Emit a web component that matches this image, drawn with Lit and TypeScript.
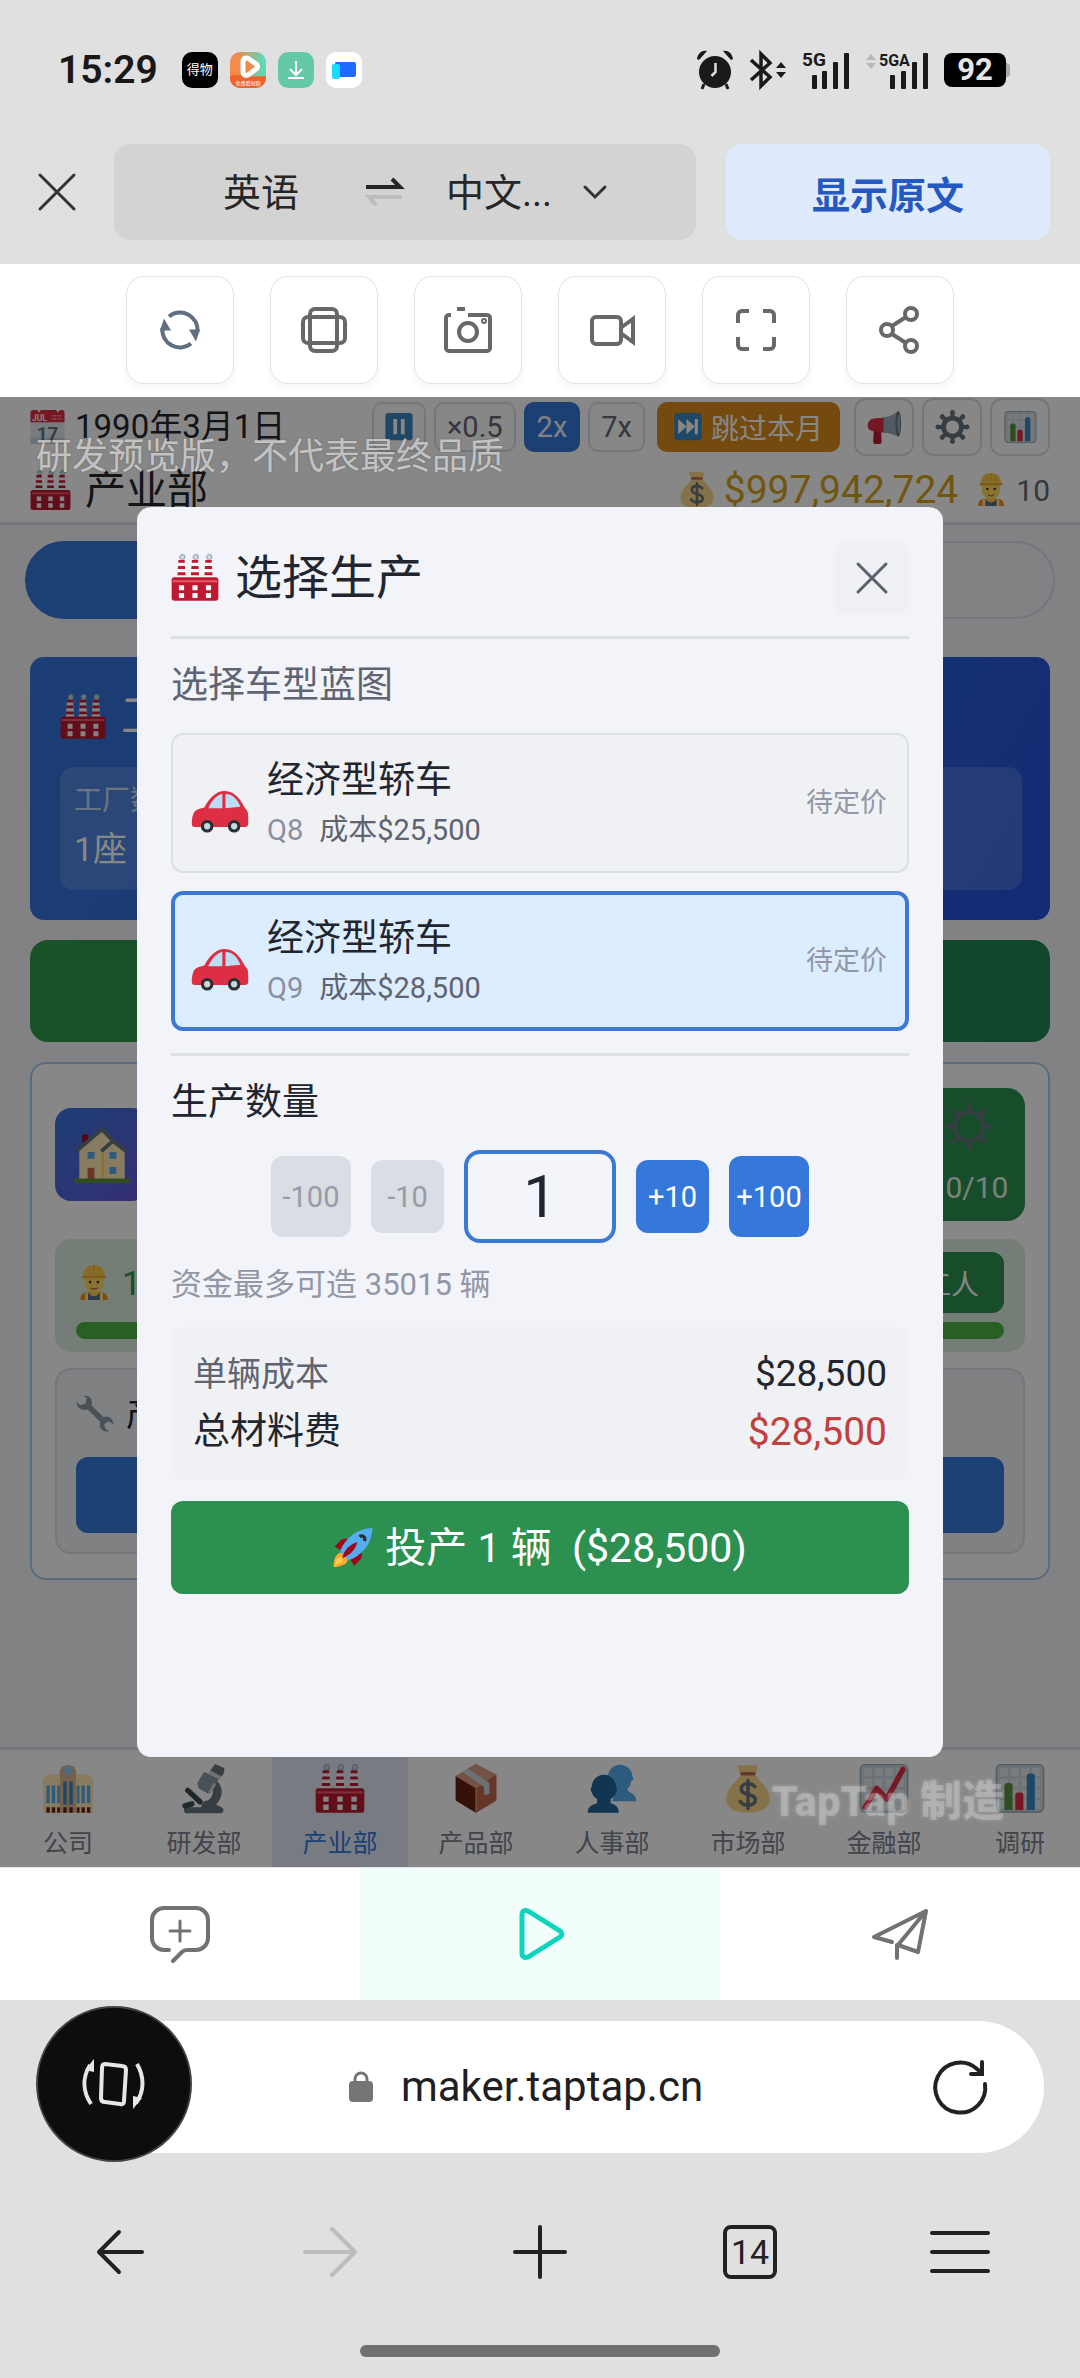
import { LitElement, css, html, svg } from "lit";
import { customElement, property, state } from "lit/decorators.js";
import { classMap } from "lit/directives/class-map.js";

const gearTeeth = [0, 45, 90, 135, 180, 225, 270, 315];
const chimneys = [7.6, 18, 28.4];

const chartGrid = svg`
    <rect x="0.5" y="0.5" width="35" height="35" rx="3.5" fill="#CCD6DD" stroke="#99AAB5" />
    <path d="M3 3h6v6H3zM11 3h6v6h-6zM19 3h6v6h-6zM27 3h6v6h-6zM3 11h6v6H3zM11 11h6v6h-6zM19 11h6v6h-6zM27 11h6v6h-6zM3 19h6v6H3zM11 19h6v6h-6zM19 19h6v6h-6zM27 19h6v6h-6zM3 27h6v6H3zM11 27h6v6h-6zM19 27h6v6h-6zM27 27h6v6h-6z" fill="#E1E8ED" />
`;

// colourful pictograms, all on a 36 unit grid
const emojis = {
    factory: svg`
        ${chimneys.map((x) => svg`
            <circle cx="${x + 0.6}" cy="2.4" r="2" fill="#CCD6DD" stroke="#99AAB5" stroke-width="0.8" />
            <path d="M${x - 2.4} 4.5h4.8l1 14h-6.8z" fill="#F5F8FA" />
            <path d="M${x - 2.4} 4.6h4.8l.15 2.2h-5.1zM${x - 2.7} 9.2h5.4l.15 2.3h-5.7zM${x - 3} 14h6l.15 2.3h-6.3z" fill="#BE1931" />
        `)}
        <path d="M2 18h32a2 2 0 0 1 2 2v14a2 2 0 0 1-2 2H2a2 2 0 0 1-2-2V20a2 2 0 0 1 2-2z" fill="#BE1931" />
        <path d="M1 20.2h34v1.6H1z" fill="#EA596E" />
        <path d="M5.6 24h4v4h-4zM16 24h4v4h-4zM26.4 24h4v4h-4zM5.6 30h4v4h-4zM16 30h4v4h-4zM26.4 30h4v4h-4z" fill="#F5F8FA" />
    `,
    calendar: svg`
        <path d="M0 10h36v23a3 3 0 0 1-3 3H3a3 3 0 0 1-3-3z" fill="#E1E8ED" />
        <path d="M0 29h36v4a3 3 0 0 1-3 3H3a3 3 0 0 1-3-3z" fill="#CCD6DD" />
        <path d="M3 0h30a3 3 0 0 1 3 3v10H0V3a3 3 0 0 1 3-3z" fill="#DD2E44" />
        <path d="M7 0h4l-2 3zM27 0h4l-2 3z" fill="#F5F8FA" />
        <text x="1.5" y="11.5" font-size="9" font-weight="700" fill="#F5F8FA">JUL</text>
        <path d="M23 6h10M23 9.5h10" stroke="#F4ABBA" stroke-width="1.5" stroke-dasharray="1.6 1.1" />
        <text x="18" y="31.5" font-size="20" font-weight="700" text-anchor="middle" fill="#66757F">17</text>
    `,
    pause: svg`
        <rect width="36" height="36" rx="4" fill="#3B88C3" />
        <path d="M10.5 8h5v20h-5zM20.500 8h5v20h-5z" fill="#fff" />
    `,
    skip: svg`
        <rect width="36" height="36" rx="4" fill="#3B88C3" />
        <path d="M5 8l11 10L5 28zM16 8l11 10-11 10zM27 8h4v20h-4z" fill="#fff" />
    `,
    megaphone: svg`
        <path d="M7 18h9l-1.500 6 .5 9a3 3 0 0 1-3 3H9a3 3 0 0 1-3-3z" fill="#BE1931" />
        <path d="M3 10.500C6 8 14 9 18 8v16c-4 0-12-1-15-2.500C-1 19-.5 13 3 10.500z" fill="#DD2E44" />
        <path d="M17 8C24 7 29 4 33 1v27c-5-2-10-4-16-4z" fill="#99AAB5" />
        <ellipse cx="32.500" cy="14.500" rx="3" ry="13.500" fill="#66757F" />
        <ellipse cx="33" cy="14.500" rx="1.500" ry="10" fill="#99AAB5" />
    `,
    gear: svg`
        <circle cx="18" cy="18" r="9.500" fill="none" stroke="#66757F" stroke-width="5" />
        ${gearTeeth.map((deg) => svg`
            <g transform="rotate(${deg} 18 18)">
                <path d="M15.800 2h4.400v6h-4.400z" fill="#66757F" />
                <circle cx="18" cy="2.600" r="2.600" fill="#66757F" />
            </g>
        `)}
    `,
    cog: svg`
        <circle cx="18" cy="18" r="11" fill="none" stroke="#66757F" stroke-width="3" />
        ${gearTeeth.map((deg) => svg`<path d="M15.800 7l1-7h2.400l1 7z" fill="#66757F" transform="rotate(${deg} 18 18)" />`)}
    `,
    bars: svg`
        ${chartGrid}
        <path d="M6.500 34V16a2 2 0 0 1 2-2h2a2 2 0 0 1 2 2v18z" fill="#5C913B" />
        <path d="M14.500 34V23a2 2 0 0 1 2-2h2a2 2 0 0 1 2 2v11z" fill="#DD2E44" />
        <path d="M23 34V9a2 2 0 0 1 2-2h2a2 2 0 0 1 2 2v25z" fill="#3B88C3" />
    `,
    trend: svg`
        ${chartGrid}
        <path d="M4 32L12.500 18 20 26 32 4" fill="none" stroke="#DD2E44" stroke-width="4" stroke-linecap="round" stroke-linejoin="round" />
    `,
    money: svg`
        <path d="M11 1c2-1 3 1 5 0s3 0 5 0 3 0 4 1-1 4-2 6H13c-1-2-4-6-2-7z" fill="#FDD888" />
        <path d="M13 8h10c4 5 11 10 11 18 0 7-6 10-16 10S2 33 2 26C2 18 9 13 13 8z" fill="#FDD888" />
        <path d="M12.500 6h11v2.500h-11z" fill="#BF6952" />
        <path d="M23 16.800c-1.500-1.700-3-2.300-5-2.300-3 0-5 1.500-5 4 0 5.300 10.500 2.800 10.500 8 0 2.500-2.300 4-5.500 4-2.500 0-4.300-.8-5.700-2.800M18 12v21" fill="none" stroke="#67757F" stroke-width="2.600" stroke-linecap="round" />
    `,
    worker: svg`
        <path d="M4 36c0-6 3-8 8-8h12c5 0 8 2 8 8z" fill="#F4900C" />
        <path d="M9 28.500h3V36H9zM24 28.500h3V36h-3z" fill="#FFE8B6" />
        <path d="M12 29l6 3 6-3v7H12z" fill="#5C6F8A" />
        <path d="M13 23h10v6c-2 4-8 4-10 0z" fill="#FFCC4D" />
        <path d="M8 11h20v7c0 6-4 10-10 10S8 24 8 18z" fill="#FFDC5D" />
        <path d="M7 11C7 4 11 0 18 0s11 4 11 11l1 2H6z" fill="#FFCC4D" />
        <path d="M6 11.500h24v1.600H6zM13 3v7M18 0v10M23 3v7" fill="#E5A92F" stroke="#E5A92F" stroke-width="0.800" />
        <circle cx="14" cy="17.500" r="1.400" fill="#662113" />
        <circle cx="22" cy="17.500" r="1.400" fill="#662113" />
        <path d="M14.500 23.500c2 1.500 5 1.500 7 0" fill="none" stroke="#C1694F" stroke-width="1.400" />
    `,
    car: svg`
        <path d="M0 28c0-3 .5-6 1.500-7.500C3 18.500 6 18 8 17.500 11 12 15 7 21 7c7 0 11 7 13 11 1.500 1 2 3 2 5v5c0 1-1 2-2 2H2c-1.500 0-2-1-2-2z" fill="#DD2E44" />
        <path d="M10.500 18c2-4 5-8.500 9-9v9zM21.500 9c5 0 8 4 9.500 8l-9.500 1z" fill="#BBDDF5" />
        <circle cx="9.800" cy="29.500" r="4" fill="#292F33" /><circle cx="27" cy="29.500" r="4" fill="#292F33" />
        <circle cx="9.800" cy="29.500" r="2" fill="#CCD6DD" /><circle cx="27" cy="29.500" r="2" fill="#CCD6DD" />
    `,
    rocket: svg`
        <path d="M1 17l6-6c3-2 7-1 9 0l-8 10zM19 35l6-6c2-3 1-7 0-9l-10 8z" fill="#A0041E" />
        <path d="M36 0S24 0 16 7.500C8 15 6 20 6 26c0 2 2 4 4 4 6 0 11-2 18.500-10C36 12 36 0 36 0z" fill="#55ACEE" />
        <path d="M6 23C2 24 0 30 0 36c6 0 12-2 13-6-1-3-4-6-7-7z" fill="#FFAC33" />
        <path d="M4 28c2-2 5 1 4 3s-4 2-6 3c0-2 0-4 2-6z" fill="#FFCC4D" />
        <path d="M8 28C10 20 14 16 22 13c-2 8-7 12-14 15z" fill="#A0041E" />
        <path d="M24 8c3-2 6 1 4.500 4" stroke="#292F33" stroke-width="3" fill="none" />
    `,
    house: svg`
        <path d="M5 5h4v9H5z" fill="#A0041E" />
        <path d="M3 35V15L18 2l7 8 8 6v19z" fill="#FFE8B6" />
        <path d="M18.500 16v18" stroke="#FFCC4D" stroke-width="1" />
        <path d="M1.500 15.500L18 1.500l8 8.500 8 6M17.500 16l8-7" fill="none" stroke="#66757F" stroke-width="2.500" />
        <path d="M8.500 16.500H13V21H8.500zM23 16.500h4.500V21H23zM23 26.500h4.500V31H23z" fill="#55ACEE" />
        <path d="M8.500 27H13v8H8.500z" fill="#C1694F" />
        <path d="M1 34h34a1.500 1.500 0 0 1 0 3H1a1.500 1.500 0 0 1 0-3z" fill="#5C913B" />
    `,
    wrench: svg`
        <path d="M7 1c3-1 8 1 8 6 0 1 0 2-.5 3L26 21.500c5-2 10 2 10 7l-5-3-4 3 1 4 4 2.500c-5 2-11-2-9-9L11 14c-6 2-11-2-11-7l4 3 5-2 1-5z" fill="#8899A6" />
    `,
    office: svg`
        <path d="M0 11l3-3h9V6c0-7 12-7 12 0v2h9l3 3v25H0z" fill="#D9B68C" />
        <path d="M0 11l3-3h9v28H0zM24 8h9l3 3v25H24z" fill="#FFE8B6" />
        <circle cx="18" cy="5" r="3.500" fill="#9CC9E8" />
        <path d="M2 16h2.500v13H2zM6 16h2.500v13H6zM10 16h2v13h-2zM24.500 16h2v13h-2zM28 16h2.500v13H28zM32 16h2.500v13H32z" fill="#55ACEE" />
        <path d="M14.500 13h2.500v17h-2.500zM19 13h2.500v17H19z" fill="#3B88C3" />
        <path d="M2 32h2.500v4H2zM6 32h2.500v4H6zM10 32h2v4h-2zM14.500 32h2.500v4h-2.500zM19 32h2.500v4H19zM24.500 32h2v4h-2zM28 32h2.500v4H28zM32 32h2.500v4H32z" fill="#662113" />
    `,
    microscope: svg`
        <path d="M5 32h11c0-3 2-5 5-5 4-3 5-8 2-12l4-3c6 5 5 13 0 18l4 2a2.500 2.500 0 0 1 0 4.500H6A2.300 2.300 0 0 1 5 32z" fill="#66757F" />
        <path d="M6 19.500L15 28M4 31l5-1.500" stroke="#3E4A52" stroke-width="4" stroke-linecap="round" />
        <path d="M18 6l11 5-5 9-3 2-7-4-1-4z" fill="#8899A6" />
        <path d="M25 14l2 1-4 7-2-1zM24 2l9 5-3 4-9-4z" fill="#CCD6DD" />
        <path d="M26 0l7 3v3l-2 3-8-4z" fill="#66757F" />
    `,
    parcel: svg`
        <path d="M18 0l15 8v19L18 36 3 27V9z" fill="#C1694F" />
        <path d="M3 9l15 9v18L3 27z" fill="#662113" />
        <path d="M18 18l15-10v19l-15 9z" fill="#C1694F" />
        <path d="M3 9L18 0l15 8-15 10z" fill="#D99E82" />
        <path d="M8 6l4-2.500L28 14v8l-4 1v-6z" fill="#CCD6DD" />
        <path d="M18 18v17" stroke="#D99E82" stroke-width="1" />
    `,
    people: svg`
        <path d="M15 9c0-5 4-9 9-9s9 4 9 8l1 3-2 1c0 3-1 5-3 6 1 3 7 3 7 9H18c2-4 1-7 0-9-2-2-3-5-3-9z" fill="#55ACEE" transform="translate(0 .5)" />
        <path d="M3 17c0-5 4-9 9-9s9 4 9 9c1 1 1 2 0 4-1 3-3 4-4 5v3c3 1 6 2 6 7H0c0-5 4-6 7-7v-3c-1-1-3-2-4-5-1-2-1-3 0-4z" fill="#226699" />
    `,
};

type EmojiName = keyof typeof emojis;

const emoji = (name: EmojiName, size: number) => html`
    <svg class="emoji" viewBox="0 0 36 37" width="${size}" height="${size}" aria-hidden="true">${emojis[name]}</svg>
`;

const base = css`
    :host {
        display: block;
    }

    * {
        box-sizing: border-box;
    }

    button,
    input,
    select {
        font: inherit;
        color: inherit;
        border: 0;
        margin: 0;
        padding: 0;
        background: none;
    }

    select {
        appearance: none;
    }

    svg {
        display: block;
        flex: none;
        overflow: visible;
    }
`;

@customElement("status-bar")
class StatusBar extends LitElement {
    static override styles = [
        base,
        css`
            .bar {
                display: flex;
                align-items: center;
                justify-content: space-between;
                padding: 46px 70px 50px 58px;
            }

            .group {
                display: flex;
                align-items: center;
                gap: 12px;
            }

            .right {
                gap: 16px;
            }

            time {
                font-size: 39px;
                line-height: 48px;
                font-weight: 600;
                color: #181818;
                margin-right: 12px;
            }

            .app {
                width: 36px;
                height: 36px;
                border-radius: 10px;
                display: grid;
                place-items: center;
                overflow: hidden;
            }

            .dewu {
                background: #000;
                color: #fff;
                font-size: 13px;
                line-height: 14px;
            }

            .download {
                background: #63c9a9;
            }

            .cloud {
                background: #fff;
            }

            .battery {
                display: flex;
                align-items: center;
            }

            .level {
                background: #000;
                color: #e6e6e6;
                border-radius: 8px;
                width: 62px;
                font-size: 31px;
                line-height: 34px;
                font-weight: 700;
                text-align: center;
            }

            .cap {
                width: 4px;
                height: 14px;
                background: #a8a8a8;
                border-radius: 0 4px 4px 0;
            }
        `,
    ];

    override render() {
        return html`
            <div class="bar">
                <div class="group">
                    <time>15:29</time>
                    <span class="app dewu">得物</span>
                    <span class="app">
                        <svg viewBox="0 0 36 36" width="36" height="36">
                            <defs>
                                <linearGradient id="sky" x1="0" x2="1"><stop offset="0.200" stop-color="#f58a4c" /><stop offset="0.900" stop-color="#5fd8b4" /></linearGradient>
                            </defs>
                            <path d="M0 0h36v36H0z" fill="url(#sky)" />
                            <path d="M0 24c12-3 18 2 36 0v12H0z" fill="#f2622c" />
                            <path d="M13 10c0-4 3-5 6-3l7 5c2 1 2 4 0 5l-8 6c-3 1-5 0-5-3z" fill="#f08a48" stroke="#fff" stroke-width="5" stroke-linejoin="round" />
                            <text x="18" y="33" font-size="5" fill="#fff" text-anchor="middle">免费看短剧</text>
                        </svg>
                    </span>
                    <span class="app download">
                        <svg viewBox="0 0 36 36" width="36" height="36" fill="none" stroke="#fff" stroke-width="2">
                            <path d="M18 9v14M12 17l6 6 6-6M10 26h16" />
                        </svg>
                    </span>
                    <span class="app cloud">
                        <svg viewBox="0 0 36 36" width="36" height="36">
                            <path d="M9 10h19a2 2 0 0 1 2 2v11a2 2 0 0 1-2 2H12z" fill="#1f6bff" />
                            <rect x="6" y="12" width="8" height="15" rx="2" fill="#19dcff" />
                        </svg>
                    </span>
                </div>
                <div class="group right">
                    <svg viewBox="0 0 38 40" width="38" height="40" fill="#1a1a1a">
                        <circle cx="19" cy="22" r="16" />
                        <path d="M1 9c1-6 5-9 10-8L3 10zM37 9c-1-6-5-9-10-8l8 9z" />
                        <path d="M8 34l-2 5M30 34l2 5" stroke="#1a1a1a" stroke-width="3" />
                        <path d="M19.500 13v9l-4 4" fill="none" stroke="#e0e0e0" stroke-width="2.500" />
                    </svg>
                    <svg viewBox="0 0 36 38" width="36" height="38" fill="none" stroke="#1a1a1a" stroke-width="3.500">
                        <path d="M1 9l19 17-9 9V3l9 9L1 29" />
                        <path d="M26 17l5-6 5 6zM26 21l5 6 5-6z" fill="#1a1a1a" stroke="none" />
                    </svg>
                    <svg viewBox="0 0 48 38" width="48" height="38" fill="#1a1a1a">
                        <text x="0" y="15" font-size="19" font-weight="700">5G</text>
                        <rect x="10" y="24" width="5" height="14" rx="1" /><rect x="20" y="20" width="5" height="18" rx="1" />
                        <rect x="31" y="11" width="5" height="27" rx="1" /><rect x="42" y="2" width="5" height="36" rx="1" />
                    </svg>
                    <svg viewBox="0 0 62 38" width="62" height="38" fill="#1a1a1a">
                        <path d="M0 9l5-6 5 6zM0 12l5 6 5-6z" fill="#b8b8b8" />
                        <text x="13" y="15" font-size="16" font-weight="700">5GA</text>
                        <rect x="24" y="24" width="5" height="14" rx="1" /><rect x="35" y="20" width="5" height="18" rx="1" />
                        <rect x="46" y="11" width="5" height="27" rx="1" /><rect x="57" y="2" width="5" height="36" rx="1" />
                    </svg>
                    <span class="battery"><span class="level">92</span><span class="cap"></span></span>
                </div>
            </div>
        `;
    }
}

@customElement("translate-bar")
class TranslateBar extends LitElement {
    static override styles = [
        base,
        css`
            .bar {
                display: flex;
                align-items: center;
                gap: 30px;
                padding: 0 30px 24px 36px;
                font-size: 38px;
                color: #262626;
            }

            .close {
                width: 42px;
                margin-right: 6px;
            }

            .langs {
                flex: 1;
                height: 96px;
                border-radius: 16px;
                background: #d3d3d3;
                display: flex;
                align-items: center;
                justify-content: center;
                padding-left: 20px;
            }

            .langs select {
                padding-top: 2px;
            }

            .from {
                margin-right: 66px;
            }

            .to {
                margin: 0 30px 0 44px;
            }

            .original {
                width: 324px;
                height: 96px;
                border-radius: 16px;
                background: #dfebfd;
                color: #2558c0;
                font-weight: 700;
            }
        `,
    ];

    override render() {
        return html`
            <div class="bar">
                <button class="close" aria-label="关闭">
                    <svg viewBox="0 0 42 42" width="42" height="42" stroke="#333" stroke-width="3" stroke-linecap="round">
                        <path d="M4 4l34 34M38 4L4 38" />
                    </svg>
                </button>
                <div class="langs">
                    <select class="from" aria-label="源语言"><option>英语</option></select>
                    <svg viewBox="0 0 36 28" width="36" height="28" fill="none" stroke-width="4">
                        <path d="M0 9h34l-8-8" stroke="#262626" />
                        <path d="M36 19H3l7 8" stroke="#bcbcbc" />
                    </svg>
                    <select class="to" aria-label="目标语言"><option>中文...</option></select>
                    <svg viewBox="0 0 24 14" width="24" height="14" fill="none" stroke="#333" stroke-width="3" stroke-linecap="round">
                        <path d="M2 2l10 10L22 2" />
                    </svg>
                </div>
                <button class="original">显示原文</button>
            </div>
        `;
    }
}

@customElement("maker-toolbar")
class MakerToolbar extends LitElement {
    private tools = [
        {
            label: "刷新",
            icon: svg`<g stroke="#5f6f7f" fill="none">
                <path d="M13 10.500A17.500 17.500 0 0 1 41.500 26M35 37.500A17.500 17.500 0 0 1 6.500 22" /></g>
                <path d="M33 23.500h11l-4 12zM15 24.500H4l4-12z" fill="#5f6f7f" stroke="none" />`,
        },
        {
            label: "旋转",
            icon: svg`<rect x="10" y="3" width="27" height="42" rx="5" /><rect x="3" y="11" width="42" height="26" rx="5" />`,
        },
        {
            label: "截图",
            icon: svg`<path d="M7 9H5a3 3 0 0 0-3 3v30a3 3 0 0 0 3 3h38a3 3 0 0 0 3-3V12a3 3 0 0 0-3-3H24M13 3h8" /><circle cx="24" cy="26" r="9" /><circle cx="40" cy="15" r="1" />`,
        },
        {
            label: "录像",
            icon: svg`<rect x="4" y="11" width="29" height="27" rx="4" /><path d="M34 21l11-8v23l-11-8" />`,
        },
        {
            label: "全屏",
            icon: svg`<path d="M6 17V9a4 4 0 0 1 4-4h7M31 5h7a4 4 0 0 1 4 4v8M42 31v8a4 4 0 0 1-4 4h-7M17 43h-7a4 4 0 0 1-4-4v-8" />`,
        },
        {
            label: "分享",
            icon: svg`<circle cx="11" cy="24" r="6" /><circle cx="35" cy="8" r="6" /><circle cx="35" cy="40" r="6" /><path d="M16 20l14-9M16 28l14 9" />`,
        },
    ];

    static override styles = [
        base,
        css`
            .bar {
                display: flex;
                justify-content: center;
                gap: 36px;
                padding: 12px 0 13px;
                background: #fff;
            }

            .tool {
                width: 108px;
                height: 108px;
                display: grid;
                place-items: center;
                border: 1px solid #e4e4e6;
                border-radius: 18px;
                background: #fff;
                box-shadow: 0 4px 6px rgba(0, 0, 0, 0.04);
            }
        `,
    ];

    override render() {
        return html`
            <div class="bar">
                ${this.tools.map(
                    (tool) => html`
                        <button class="tool" aria-label="${tool.label}">
                            <svg viewBox="0 0 48 48" width="48" height="48" fill="none" stroke="#686868" stroke-width="4">${tool.icon}</svg>
                        </button>
                    `,
                )}
            </div>
        `;
    }
}

@customElement("game-page")
class GamePage extends LitElement {
    private tabs: { icon: EmojiName; label: string }[] = [
        { icon: "office", label: "公司" },
        { icon: "microscope", label: "研发部" },
        { icon: "factory", label: "产业部" },
        { icon: "parcel", label: "产品部" },
        { icon: "people", label: "人事部" },
        { icon: "money", label: "市场部" },
        { icon: "trend", label: "金融部" },
        { icon: "bars", label: "调研" },
    ];

    static override styles = [
        base,
        css`
            :host {
                display: flex;
                flex-direction: column;
                background: #f5f5fa;
                color: #24262e;
            }

            header {
                background: #fff;
                border-bottom: 3px solid #dddfe6;
                padding: 0 30px;
                height: 128px;
            }

            .row {
                display: flex;
                align-items: center;
                height: 60px;
                gap: 8px;
            }

            .row.low {
                height: 66px;
            }

            .date {
                font-size: 33px;
                line-height: 60px;
                margin: 0 auto 0 2px;
            }

            .speed {
                min-width: 54px;
                height: 50px;
                padding: 0 11px;
                border: 2px solid #dddfe6;
                border-radius: 10px;
                font-size: 29px;
                color: #646974;
            }

            .speed.on {
                background: #3677dc;
                border-color: #3677dc;
                color: #f0f4fa;
            }

            .skip {
                display: flex;
                align-items: center;
                gap: 9px;
                height: 50px;
                padding: 0 17px;
                margin: 0 6px 0 4px;
                border-radius: 10px;
                background: #dc8c1c;
                color: #fff;
                font-size: 28px;
            }

            .tool {
                width: 60px;
                height: 58px;
                display: grid;
                place-items: center;
                border: 2px solid #dddfe6;
                border-radius: 12px;
            }

            h1 {
                font-size: 41px;
                line-height: 60px;
                font-weight: 400;
                margin: 0 auto 0 6px;
            }

            .cash {
                font-size: 39px;
                color: #d3a21d;
                margin-right: 8px;
            }

            .staff {
                font-size: 30px;
                color: #646974;
            }

            main {
                flex: 1;
                padding: 16px 30px 40px;
                display: flex;
                flex-direction: column;
                gap: 20px;
            }

            .pills {
                display: flex;
                gap: 12px;
                margin: 0 -5px 18px;
            }

            .pill {
                flex: 1;
                height: 78px;
                border-radius: 39px;
                border: 2px solid #dddfe6;
            }

            .pill.on {
                border-color: #3677dc;
                background: #3677dc;
            }

            .hero {
                border-radius: 14px;
                background: linear-gradient(120deg, #3677dc, #2454dc);
                color: #fff;
                padding: 30px 28px 30px 30px;
            }

            .hero h2 {
                display: flex;
                align-items: center;
                gap: 15px;
                font-size: 45px;
                line-height: 60px;
                font-weight: 400;
                margin: 0 0 20px;
            }

            .stat {
                border-radius: 14px;
                background: rgba(255, 255, 255, 0.15);
                padding: 12px 14px;
                height: 123px;
            }

            .stat span {
                display: block;
                font-size: 28px;
                line-height: 44px;
                opacity: 0.7;
            }

            .stat b {
                font-size: 34px;
                line-height: 52px;
                font-weight: 400;
            }

            .build {
                height: 102px;
                border-radius: 18px;
                background: linear-gradient(120deg, #339c4c, #1f8455);
            }

            .plant {
                background: #fff;
                border: 2px solid #a9cbea;
                border-radius: 16px;
                padding: 24px 23px;
                display: flex;
                flex-direction: column;
                gap: 16px;
            }

            .top {
                display: flex;
                justify-content: space-between;
                align-items: center;
                margin-bottom: 2px;
            }

            .home {
                width: 93px;
                height: 93px;
                border-radius: 16px;
                display: grid;
                place-items: center;
                background: linear-gradient(135deg, #3677dc, #6757d8);
            }

            .lines {
                width: 113px;
                height: 133px;
                border-radius: 18px;
                background: #2c9150;
                color: #e6f4ea;
                font-size: 30px;
                line-height: 38px;
                display: flex;
                flex-direction: column;
                align-items: center;
                justify-content: center;
                gap: 18px;
            }

            .crew {
                background: #dcefdf;
                border-radius: 16px;
                padding: 13px 21px;
            }

            .crew .top {
                color: #2c9150;
                font-size: 34px;
                margin-bottom: 9px;
            }

            .crew .count {
                display: flex;
                align-items: center;
                gap: 10px;
            }

            .hire {
                height: 61px;
                padding: 0 25px;
                border-radius: 12px;
                background: #2c9150;
                color: #fff;
                font-size: 28px;
            }

            .meter {
                height: 17px;
                border-radius: 9px;
                background: #4eb447;
            }

            .gear {
                border: 2px solid #dddfe6;
                border-radius: 16px;
                background: #f2f3f8;
                padding: 19px;
            }

            .gear h3 {
                display: flex;
                align-items: center;
                gap: 12px;
                font-size: 34px;
                line-height: 50px;
                font-weight: 400;
                margin: 0 0 18px;
            }

            .go {
                display: block;
                width: 100%;
                height: 76px;
                border-radius: 12px;
                background: #3677dc;
            }

            nav {
                display: flex;
                overflow: hidden;
                background: #fff;
                border-top: 3px solid #dddfe6;
            }

            .tab {
                flex: 1 0 136px;
                display: flex;
                flex-direction: column;
                align-items: center;
                gap: 12px;
                padding: 14px 0 5px;
                text-decoration: none;
                color: #7c818e;
                font-size: 25px;
                line-height: 36px;
            }

            .tab.on {
                background: #e2ebf6;
                color: #3677dc;
            }
        `,
    ];

    override render() {
        return html`
            <header>
                <div class="row">
                    ${emoji("calendar", 35)}
                    <span class="date">1990年3月1日</span>
                    <button class="speed" aria-label="暂停">${emoji("pause", 28)}</button>
                    <button class="speed">×0.5</button>
                    <button class="speed on">2x</button>
                    <button class="speed">7x</button>
                    <button class="skip">${emoji("skip", 28)}跳过本月</button>
                    <button class="tool" aria-label="公告">${emoji("megaphone", 35)}</button>
                    <button class="tool" aria-label="设置">${emoji("gear", 35)}</button>
                    <button class="tool" aria-label="统计">${emoji("bars", 33)}</button>
                </div>
                <div class="row low">
                    ${emoji("factory", 41)}
                    <h1>产业部</h1>
                    ${emoji("money", 38)}
                    <span class="cash">$997,942,724</span>
                    ${emoji("worker", 34)}
                    <span class="staff">10</span>
                </div>
            </header>
            <main>
                <div class="pills">
                    <button class="pill on" aria-label="生产"></button>
                    <button class="pill" aria-label="库存"></button>
                </div>
                <section class="hero">
                    <h2>${emoji("factory", 46)}工厂</h2>
                    <div class="stat"><span>工厂数</span><b>1座</b></div>
                </section>
                <button class="build" aria-label="建厂"></button>
                <section class="plant">
                    <div class="top">
                        <div class="home">${emoji("house", 56)}</div>
                        <div class="lines">${emoji("cog", 48)}10/10</div>
                    </div>
                    <div class="crew">
                        <div class="top">
                            <span class="count">${emoji("worker", 36)}10</span>
                            <button class="hire">招工人</button>
                        </div>
                        <div class="meter"></div>
                    </div>
                    <div class="gear">
                        <h3>${emoji("wrench", 38)}产线</h3>
                        <button class="go" aria-label="投产"></button>
                    </div>
                </section>
            </main>
            <nav>
                ${this.tabs.map(
                    (tab) => html`
                        <a href="#" class="tab ${classMap({ on: tab.label === "产业部" })}">
                            ${emoji(tab.icon, 50)}
                            <span>${tab.label}</span>
                        </a>
                    `,
                )}
            </nav>
        `;
    }
}

@customElement("produce-dialog")
class ProduceDialog extends LitElement {
    @property({ type: Number }) limit = 35015;
    @state() private selected = 1;
    @state() private amount = 1;

    private blueprints = [
        { name: "经济型轿车", quality: "Q8", cost: 25500 },
        { name: "经济型轿车", quality: "Q9", cost: 28500 },
    ];

    static override styles = [
        base,
        css`
            .dialog {
                height: 100%;
                background: #f2f4f9;
                border-radius: 14px;
                padding: 35px 34px;
                display: flex;
                flex-direction: column;
                gap: 22px;
                color: #22252d;
                font-size: 37px;
                line-height: 48px;
            }

            .head {
                display: flex;
                align-items: center;
                gap: 16px;
            }

            h2 {
                flex: 1;
                font-size: 47px;
                line-height: 72px;
                font-weight: 400;
                margin: 0;
            }

            .close {
                width: 74px;
                height: 72px;
                border-radius: 10px;
                background: #eff0f4;
                display: grid;
                place-items: center;
            }

            hr {
                width: 100%;
                height: 3px;
                border: 0;
                margin: 0;
                background: #dcdfe4;
            }

            h3 {
                font-size: 37px;
                line-height: 50px;
                font-weight: 400;
                margin: 0;
            }

            .muted {
                color: #5f6470;
            }

            .cards {
                display: flex;
                flex-direction: column;
                gap: 18px;
            }

            .card {
                display: flex;
                align-items: center;
                gap: 18px;
                height: 140px;
                padding: 0 20px 0 18px;
                border: 2px solid #dcdfe4;
                border-radius: 12px;
                background: #f0f1f5;
                text-align: left;
            }

            .card.on {
                border: 4px solid #3c79d2;
                padding: 0 18px 0 16px;
                background: #dcedff;
            }

            .card .emoji {
                margin-top: 12px;
            }

            .info {
                flex: 1;
                padding-top: 6px;
            }

            .name,
            .sub {
                display: block;
            }

            .sub {
                font-size: 29px;
                line-height: 50px;
                color: #5f6470;
            }

            .quality {
                color: #8b90a0;
                margin-right: 16px;
            }

            .price {
                font-size: 27px;
                color: #9397a5;
            }

            .stepper {
                display: flex;
                align-items: center;
                justify-content: center;
                gap: 20px;
            }

            .step {
                width: 73px;
                height: 73px;
                border-radius: 12px;
                background: #3677dc;
                color: #fff;
                font-size: 29px;
            }

            .step.wide {
                width: 80px;
                height: 81px;
            }

            .step:disabled {
                background: #dadde4;
                color: #979ba7;
            }

            .amount {
                width: 152px;
                height: 93px;
                border: 4px solid #3c79d2;
                border-radius: 16px;
                background: #f4f5fa;
                font-size: 60px;
                text-align: center;
            }

            .hint {
                font-size: 31px;
                line-height: 40px;
                color: #9397a5;
                margin: 0;
            }

            .totals {
                display: grid;
                grid-template-columns: 1fr auto;
                row-gap: 10px;
                margin: 0;
                padding: 23px 22px;
                border-radius: 12px;
                background: #f0f1f5;
            }

            .totals dt {
                font-size: 34px;
            }

            .totals dd {
                margin: 0;
                text-align: right;
                font-size: 37px;
            }

            .totals .sum {
                font-size: 37px;
            }

            .totals .red {
                font-size: 39px;
                color: #c23f40;
            }

            .submit {
                display: flex;
                align-items: center;
                justify-content: center;
                gap: 12px;
                height: 93px;
                border-radius: 12px;
                background: #2c9150;
                color: #fff;
                font-size: 41px;
            }
        `,
    ];

    private add(step: number) {
        this.amount = Math.min(this.limit, Math.max(1, this.amount + step));
    }

    private handleInput(event: Event) {
        this.amount = Number((event.target as HTMLInputElement).value) || 1;
    }

    private money(value: number) {
        return "$" + value.toLocaleString("en-US");
    }

    private renderStep(step: number) {
        return html`
            <button
                class="step ${classMap({ wide: Math.abs(step) === 100 })}"
                ?disabled=${step < 0 && this.amount <= 1}
                @click=${() => this.add(step)}
            >${step > 0 ? "+" : "-"}${Math.abs(step)}</button>
        `;
    }

    override render() {
        const unit = this.blueprints[this.selected].cost;
        const total = this.money(unit * this.amount);

        return html`
            <div class="dialog" role="dialog" aria-labelledby="title">
                <div class="head">
                    ${emoji("factory", 48)}
                    <h2 id="title">选择生产</h2>
                    <button class="close" aria-label="关闭">
                        <svg viewBox="0 0 32 32" width="32" height="32" stroke="#5a5f6a" stroke-width="3" stroke-linecap="round">
                            <path d="M2 2l28 28M30 2L2 30" />
                        </svg>
                    </button>
                </div>
                <hr />
                <h3 class="muted">选择车型蓝图</h3>
                <div class="cards">
                    ${this.blueprints.map(
                        (item, i) => html`
                            <button
                                class="card ${classMap({ on: i === this.selected })}"
                                aria-pressed="${i === this.selected}"
                                @click=${() => (this.selected = i)}
                            >
                                ${emoji("car", 58)}
                                <span class="info">
                                    <span class="name">${item.name}</span>
                                    <span class="sub"><span class="quality">${item.quality}</span>成本${this.money(item.cost)}</span>
                                </span>
                                <span class="price">待定价</span>
                            </button>
                        `,
                    )}
                </div>
                <hr />
                <h3><label for="amount">生产数量</label></h3>
                <div class="stepper">
                    ${this.renderStep(-100)} ${this.renderStep(-10)}
                    <input id="amount" class="amount" type="text" inputmode="numeric" .value=${String(this.amount)} @change=${this.handleInput} />
                    ${this.renderStep(10)} ${this.renderStep(100)}
                </div>
                <p class="hint">资金最多可造 ${this.limit} 辆</p>
                <dl class="totals">
                    <dt class="muted">单辆成本</dt>
                    <dd>${this.money(unit)}</dd>
                    <dt class="sum">总材料费</dt>
                    <dd class="red">${total}</dd>
                </dl>
                <button class="submit">${emoji("rocket", 40)}<span>投产 ${this.amount} 辆&nbsp; (${total})</span></button>
            </div>
        `;
    }
}

@customElement("browser-bar")
class BrowserBar extends LitElement {
    static override styles = [
        base,
        css`
            .actions {
                display: grid;
                grid-template-columns: repeat(3, 1fr);
                background: #fff;
                border-top: 1px solid #e4e4e4;
            }

            .action {
                height: 132px;
                display: grid;
                place-items: center;
            }

            .action.on {
                background: #f2fefc;
            }

            .address {
                position: relative;
                display: flex;
                align-items: center;
                margin: 21px 36px 0;
                padding: 0 54px 0 156px;
                height: 132px;
                border-radius: 66px;
                background: #fff;
            }

            .float {
                position: absolute;
                left: 0;
                top: -15px;
                width: 156px;
                height: 156px;
                border-radius: 50%;
                border: 2px solid #444;
                background: #0d0d0d;
                display: grid;
                place-items: center;
            }

            .url {
                flex: 1;
                display: flex;
                align-items: center;
                justify-content: center;
                gap: 28px;
                padding-right: 70px;
                font-size: 42px;
                line-height: 52px;
                color: #1f1f1f;
            }

            .nav {
                display: grid;
                grid-template-columns: repeat(5, 1fr);
                padding: 60px 15px 54px;
            }

            .nav button {
                height: 78px;
                display: grid;
                place-items: center;
            }

            .count {
                width: 54px;
                height: 54px;
                border: 4px solid #222;
                border-radius: 8px;
                font-size: 34px;
                line-height: 46px;
                color: #222;
            }

            .handle {
                width: 360px;
                height: 12px;
                border-radius: 6px;
                background: #717171;
                margin: 0 auto 21px;
            }
        `,
    ];

    override render() {
        return html`
            <div class="actions">
                <button class="action" aria-label="评论">
                    <svg viewBox="0 0 60 60" width="60" height="60" fill="none" stroke="#727272" stroke-width="4" stroke-linecap="round">
                        <path d="M19 46h-5A12 12 0 0 1 2 34V16A12 12 0 0 1 14 4h32a12 12 0 0 1 12 12v18a12 12 0 0 1-12 12h-9q-3 0-5 2l-9 9" />
                        <path d="M30 17v20M20 27h20" stroke-width="3" />
                    </svg>
                </button>
                <button class="action on" aria-label="运行">
                    <svg viewBox="0 0 46 54" width="46" height="54" fill="none" stroke="#0fd4bd" stroke-width="5">
                        <path d="M5 8q0-6 6-4l32 20q4 3 0 6L11 50q-6 2-6-4z" />
                    </svg>
                </button>
                <button class="action" aria-label="发布">
                    <svg viewBox="0 0 60 54" width="60" height="54" fill="none" stroke="#727272" stroke-width="4" stroke-linejoin="round" stroke-linecap="round">
                        <path d="M22 35L4 30 56 4l-8 41-20-7L56 4M27 51V38" />
                    </svg>
                </button>
            </div>
            <div class="address">
                <button class="float" aria-label="旋转屏幕">
                    <svg viewBox="0 0 64 52" width="64" height="52" fill="none" stroke="#e6e6e6" stroke-width="4">
                        <path d="M23 6l17 2q4 0 4 4l-2 31q0 4-4 3l-15-2q-4 0-4-4l1-30q0-4 3-4z" />
                        <path d="M9 46C1 34 0 20 8 7M55 6c7 12 8 27-1 39" />
                        <path d="M3 12l9-11v13zM60 40l-9 11V38z" fill="#e6e6e6" stroke="none" />
                    </svg>
                </button>
                <button class="url">
                    <svg viewBox="0 0 24 30" width="24" height="30">
                        <rect y="9" width="24" height="21" rx="4" fill="#757575" />
                        <path d="M6 11V7a6 6 0 0 1 12 0v4" fill="none" stroke="#757575" stroke-width="3" />
                    </svg>
                    maker.taptap.cn
                </button>
                <button aria-label="重新加载">
                    <svg viewBox="0 0 60 60" width="60" height="60" fill="none" stroke="#222" stroke-width="4" stroke-linecap="round">
                        <path d="M55 27a25 25 0 1 1-8-15l5 4M52 5v12H41" />
                    </svg>
                </button>
            </div>
            <div class="nav">
                <button aria-label="后退">
                    <svg viewBox="0 0 48 48" width="48" height="48" fill="none" stroke="#222" stroke-width="4" stroke-linecap="round" stroke-linejoin="round"><path d="M46 24H3M23 4L3 24l20 20" /></svg>
                </button>
                <button aria-label="前进">
                    <svg viewBox="0 0 54 54" width="54" height="54" fill="none" stroke="#bcbcbc" stroke-width="4" stroke-linecap="round" stroke-linejoin="round"><path d="M2 27h49M29 4l23 23-23 23" /></svg>
                </button>
                <button aria-label="新建标签页">
                    <svg viewBox="0 0 54 54" width="54" height="54" stroke="#222" stroke-width="4" stroke-linecap="round"><path d="M2 27h50M27 2v50" /></svg>
                </button>
                <button aria-label="标签页"><span class="count">14</span></button>
                <button aria-label="菜单">
                    <svg viewBox="0 0 60 48" width="60" height="48" stroke="#222" stroke-width="4" stroke-linecap="round"><path d="M2 5h56M2 24h56M2 43h56" /></svg>
                </button>
            </div>
            <div class="handle"></div>
        `;
    }
}

@customElement("app-root")
class AppRoot extends LitElement {
    static override styles = [
        base,
        css`
            :host {
                display: flex;
                flex-direction: column;
                min-height: 100vh;
                background: #e0e0e0;
                font-family: Roboto, "Noto Sans CJK SC", sans-serif;
            }

            .stage {
                position: relative;
                flex: 1;
                display: flex;
                flex-direction: column;
            }

            .page {
                flex: 1;
                display: flex;
            }

            .stage-fill {
                flex: 1;
                min-width: 0;
            }

            .shade {
                position: absolute;
                inset: 0;
                display: grid;
                align-items: center;
                grid-template-rows: 100%;
                padding: 0 137px;
                background: rgba(0, 0, 0, 0.47);
            }

            .dialog {
                height: 85%;
            }

            .preview {
                position: absolute;
                left: 36px;
                top: 36px;
                font-size: 36px;
                line-height: 48px;
                color: rgba(255, 255, 255, 0.6);
                text-shadow: 0 0 2px rgba(0, 0, 0, 0.25);
            }

            .brand {
                position: absolute;
                right: 76px;
                bottom: 37px;
                font-size: 42px;
                line-height: 56px;
                font-weight: 900;
                color: rgba(255, 255, 255, 0.22);
                text-shadow: 0 0 4px rgba(255, 255, 255, 0.2);
            }
        `,
    ];

    override render() {
        return html`
            <status-bar></status-bar>
            <translate-bar></translate-bar>
            <maker-toolbar></maker-toolbar>
            <div class="stage">
                <div class="page"><game-page class="stage-fill"></game-page></div>
                <div class="shade"><produce-dialog class="dialog"></produce-dialog></div>
                <div class="preview">研发预览版，不代表最终品质</div>
                <div class="brand">TapTap 制造</div>
            </div>
            <browser-bar></browser-bar>
        `;
    }
}
